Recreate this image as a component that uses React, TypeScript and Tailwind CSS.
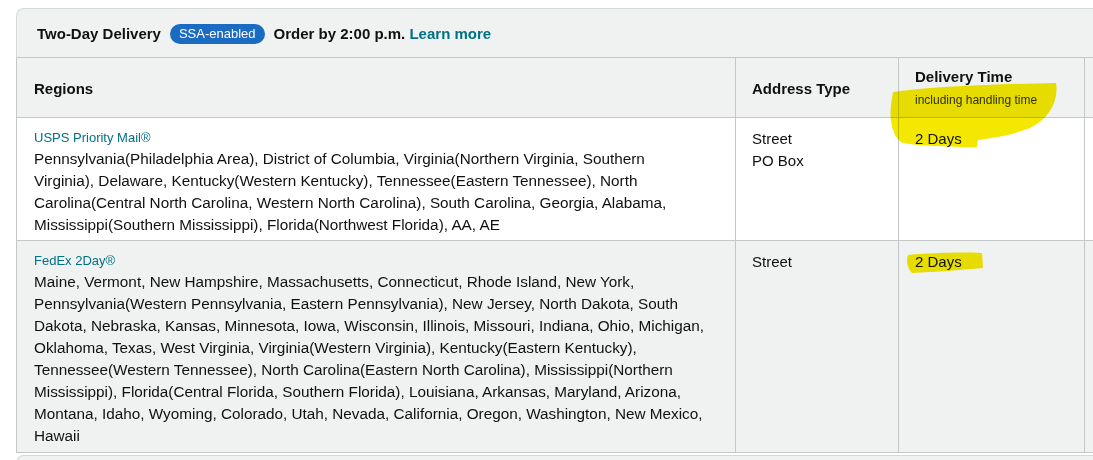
import React from "react";

const usLines = [
  "Pennsylvania(Philadelphia Area), District of Columbia, Virginia(Northern Virginia, Southern",
  "Virginia), Delaware, Kentucky(Western Kentucky), Tennessee(Eastern Tennessee), North",
  "Carolina(Central North Carolina, Western North Carolina), South Carolina, Georgia, Alabama,",
  "Mississippi(Southern Mississippi), Florida(Northwest Florida), AA, AE",
];

const fedexLines = [
  "Maine, Vermont, New Hampshire, Massachusetts, Connecticut, Rhode Island, New York,",
  "Pennsylvania(Western Pennsylvania, Eastern Pennsylvania), New Jersey, North Dakota, South",
  "Dakota, Nebraska, Kansas, Minnesota, Iowa, Wisconsin, Illinois, Missouri, Indiana, Ohio, Michigan,",
  "Oklahoma, Texas, West Virginia, Virginia(Western Virginia), Kentucky(Eastern Kentucky),",
  "Tennessee(Western Tennessee), North Carolina(Eastern North Carolina), Mississippi(Northern",
  "Mississippi), Florida(Central Florida, Southern Florida), Louisiana, Arkansas, Maryland, Arizona,",
  "Montana, Idaho, Wyoming, Colorado, Utah, Nevada, California, Oregon, Washington, New Mexico,",
  "Hawaii",
];

const rows = [
  { carrier: "USPS Priority Mail®", lines: usLines, types: ["Street", "PO Box"], time: "2 Days", bg: "bg-white" },
  { carrier: "FedEx 2Day®", lines: fedexLines, types: ["Street"], time: "2 Days", bg: "bg-[#f0f2f2]" },
];

function Cell({ children, className = "" }: { children?: React.ReactNode; className?: string }) {
  return <div className={`border-r border-b border-[#c4c7c7] ${className}`}>{children}</div>;
}

export default function App() {
  return (
    <div
      className="relative w-[1093px] h-[460px] overflow-hidden bg-white text-[#0f1111]"
      style={{ fontFamily: '"Liberation Sans", Arial, sans-serif' }}
    >
      <div className="pt-[8px] pl-[16px]">
        <div className="w-[1200px] border-l border-t border-[#d5d9d9] rounded-tl-lg bg-[#f0f2f2]">
          {/* card header */}
          <div className="h-[49px] flex items-center gap-[9px] pl-[20px] pt-[2px] border-b border-[#c4c7c7] rounded-tl-lg text-[15px] font-bold">
            <span>Two-Day Delivery</span>
            <span className="h-[20px] px-[9px] rounded-full bg-[#1b6bc2] text-white text-[13px] font-normal leading-[20px]">
              SSA-enabled
            </span>
            <span>
              Order by 2:00 p.m. <span className="text-[#007185]">Learn more</span>
            </span>
          </div>

          {/* table */}
          <div className="grid grid-cols-[719px_163px_186px_131px] border-l border-[#c4c7c7] -ml-px">
            <Cell className="h-[60px] flex items-center pl-[17px] pt-[3px] text-[15px] font-bold">Regions</Cell>
            <Cell className="h-[60px] flex items-center px-4 pt-[3px] text-[15px] font-bold">Address Type</Cell>
            <Cell className="h-[60px] flex flex-col justify-center px-4 pt-[1px]">
              <span className="text-[15px] font-bold leading-[20px]">Delivery Time</span>
              <span className="text-[12px] leading-[18px] mt-[4px] text-[#333]">including handling time</span>
            </Cell>
            <Cell className="h-[60px]" />

            {rows.map((r, i) => (
              <React.Fragment key={r.carrier}>
                <Cell className={`${r.bg} pl-[17px] pt-[10px] ${i === 0 ? "pb-[4px]" : "pb-[5px]"}`}>
                  <div className="text-[13px] leading-[20px] text-[#007185]">{r.carrier}</div>
                  {r.lines.map((l) => (
                    <div key={l} className="text-[15.3px] leading-[22px] whitespace-nowrap">
                      {l}
                    </div>
                  ))}
                </Cell>
                <Cell className={`${r.bg} px-4 pt-[10px] text-[15px] leading-[22px]`}>
                  {r.types.map((t) => (
                    <div key={t}>{t}</div>
                  ))}
                </Cell>
                <Cell className={`${r.bg} px-4 pt-[10px] text-[15px] leading-[22px]`}>{r.time}</Cell>
                <Cell className={r.bg} />
              </React.Fragment>
            ))}
          </div>
        </div>

        {/* next card edge */}
        <div className="mt-[2px] w-[1200px] h-[20px] border-l border-t border-[#d5d9d9] rounded-tl-lg bg-[#f0f2f2]" />
      </div>

      {/* highlighter marks */}
      <svg
        className="absolute inset-0 pointer-events-none mix-blend-multiply"
        width="1093"
        height="460"
        viewBox="0 0 1093 460"
      >
        <path
          d="M893 92 C940 86 1000 84 1056 83 C1059 100 1050 118 1030 128 C1010 136 992 138 978 140 L977 147 C950 147 920 146 903 143 C893 139 889 120 891 105 Z"
          fill="#f5e800"
        />
        <path
          d="M908 255 C930 253 960 252 982 253 L983 268 C960 270 935 272 912 273 C907 268 906 260 908 255 Z"
          fill="#f5e800"
        />
      </svg>
    </div>
  );
}
